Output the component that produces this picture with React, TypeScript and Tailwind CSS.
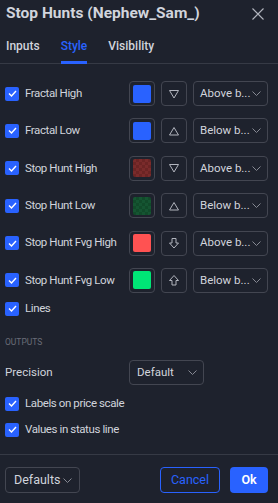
import { useState } from "react";

type Marker = "down" | "up" | "arrowDown" | "arrowUp";

type Row = {
  label: string;
  color: string;
  checker?: string;
  marker: Marker;
  place: string;
};

const rows: Row[] = [
  { label: "Fractal High", color: "#2962ff", marker: "down", place: "Above b..." },
  { label: "Fractal Low", color: "#2962ff", marker: "up", place: "Below b..." },
  { label: "Stop Hunt High", color: "#6b2424", checker: "#7a2b2b", marker: "down", place: "Above b..." },
  { label: "Stop Hunt Low", color: "#114a2a", checker: "#155532", marker: "up", place: "Below b..." },
  { label: "Stop Hunt Fvg High", color: "#ff5252", marker: "arrowDown", place: "Above b..." },
  { label: "Stop Hunt Fvg Low", color: "#00e676", marker: "arrowUp", place: "Below b..." },
];

function Check() {
  return (
    <span className="flex h-[14px] w-[14px] shrink-0 items-center justify-center rounded-[2px] bg-[#2962ff]">
      <svg width="9" height="7" viewBox="0 0 9 7" fill="none">
        <path d="M1 3.5L3.5 6L8 1" stroke="#fff" strokeWidth="1.4" />
      </svg>
    </span>
  );
}

function Chevron() {
  return (
    <svg width="9" height="5" viewBox="0 0 9 5" fill="none">
      <path d="M0.5 0.5L4.5 4.5L8.5 0.5" stroke="#868993" strokeWidth="1" />
    </svg>
  );
}

function MarkerIcon({ kind }: { kind: Marker }) {
  const d = {
    down: "M1.5 2.5H10.5L6 10Z",
    up: "M1.5 10H10.5L6 2.5Z",
    arrowDown: "M4 1.5H8V6H10.5L6 11L1.5 6H4Z",
    arrowUp: "M4 11H8V6.5H10.5L6 1.5L1.5 6.5H4Z",
  }[kind];
  return (
    <svg width="12" height="12" viewBox="0 0 12 12" fill="none">
      <path d={d} stroke="#b2b5be" strokeWidth="1" strokeLinejoin="miter" />
    </svg>
  );
}

function Swatch({ color, checker }: { color: string; checker?: string }) {
  return (
    <div className="flex h-[25px] w-[26px] items-center justify-center rounded-[4px] border border-[#434651]">
      {checker ? (
        <svg width="18" height="18" viewBox="0 0 18 18">
          <defs>
            <pattern id={`p-${checker}`} width="6" height="6" patternUnits="userSpaceOnUse">
              <rect width="6" height="6" fill={color} />
              <rect width="3" height="3" fill={checker} />
              <rect x="3" y="3" width="3" height="3" fill={checker} />
            </pattern>
          </defs>
          <rect width="18" height="18" rx="2" fill={`url(#p-${checker})`} />
        </svg>
      ) : (
        <span className="h-[18px] w-[18px] rounded-[2px]" style={{ background: color }} />
      )}
    </div>
  );
}

export default function App() {
  const [tab, setTab] = useState("Style");

  return (
    <div className="flex h-[503px] w-[278px] flex-col bg-[#1e222d] font-['Roboto',sans-serif] text-[#d1d4dc]">
      {/* Header */}
      <div className="flex h-[27px] items-center justify-between pl-[6px] pr-[14px]">
        <span className="text-[15.5px] font-bold text-[#d1d4dc]">Stop Hunts (Nephew_Sam_)</span>
        <svg width="12" height="12" viewBox="0 0 12 12" fill="none">
          <path d="M0.5 0.5L11.5 11.5M11.5 0.5L0.5 11.5" stroke="#b2b5be" strokeWidth="1.1" />
        </svg>
      </div>

      {/* Tabs */}
      <div className="flex h-[37px] gap-[21px] border-b border-[#363a45] pl-[6px] text-[12px] font-medium">
        {["Inputs", "Style", "Visibility"].map((t) => (
          <button
            key={t}
            onClick={() => setTab(t)}
            className={`relative flex items-center pt-[2px] ${t === tab ? "text-[#2962ff]" : "text-[#d1d4dc]"}`}
          >
            {t}
            {t === tab && <span className="absolute -bottom-px left-0 right-0 h-[3px] bg-[#2962ff]" />}
          </button>
        ))}
      </div>

      {/* Body */}
      <div className="flex flex-1 flex-col px-[5px] pt-[17px] text-[11.5px] tracking-[-0.4px]">
        <div className="flex flex-col gap-[12.4px]">
          {rows.map((r) => (
            <div key={r.label} className="flex h-[25px] items-center">
              <Check />
              <span className="ml-[6px] flex-1 whitespace-nowrap text-[#d1d4dc]">{r.label}</span>
              <div className="mr-[5px] flex gap-[6px]">
                <Swatch color={r.color} checker={r.checker} />
                <div className="flex h-[25px] w-[26px] items-center justify-center rounded-[4px] border border-[#434651]">
                  <MarkerIcon kind={r.marker} />
                </div>
                <div className="flex h-[25px] w-[75px] items-center justify-between whitespace-nowrap rounded-[4px] border border-[#434651] pl-[6px] pr-[6px] text-[11.5px] tracking-normal text-[#d1d4dc]">
                  <span>{r.place}</span>
                  <Chevron />
                </div>
              </div>
            </div>
          ))}
        </div>

        <div className="mt-[9px] flex h-[14px] items-center">
          <Check />
          <span className="ml-[6px]">Lines</span>
        </div>

        <div className="mt-[21px] text-[8.5px] uppercase leading-[10px] tracking-normal text-[#6a6d78]">Outputs</div>

        <div className="mt-[13px] flex h-[25px] items-center">
          <span className="w-[124px] text-[11.5px] tracking-normal">Precision</span>
          <div className="flex h-[25px] w-[75px] items-center justify-between rounded-[4px] border border-[#434651] pl-[7px] pr-[6px] text-[11.5px] tracking-normal">
            <span>Default</span>
            <Chevron />
          </div>
        </div>

        <div className="mt-[12px] flex h-[14px] items-center">
          <Check />
          <span className="ml-[6px]">Labels on price scale</span>
        </div>
        <div className="mt-[12px] flex h-[14px] items-center">
          <Check />
          <span className="ml-[6px]">Values in status line</span>
        </div>
      </div>

      {/* Footer */}
      <div className="flex h-[49px] items-start justify-between border-t border-[#363a45] px-[5px] pr-[10px] pt-[12px] text-[12.5px]">
        <div className="flex h-[26px] w-[75px] items-center justify-between rounded-[4px] border border-[#434651] pl-[8px] pr-[7px]">
          <span>Defaults</span>
          <Chevron />
        </div>
        <div className="flex gap-[10px]">
          <button className="h-[26px] w-[60px] rounded-[4px] border border-[#2962ff] text-[#2962ff]">Cancel</button>
          <button className="h-[26px] w-[38px] rounded-[4px] bg-[#2962ff] font-semibold text-white">Ok</button>
        </div>
      </div>
    </div>
  );
}
